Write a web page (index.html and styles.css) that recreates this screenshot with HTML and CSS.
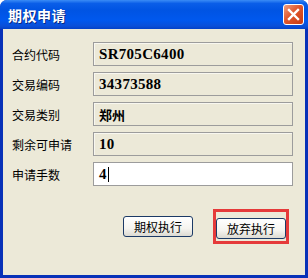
FILE: index.html
```html
<!DOCTYPE html>
<html lang="zh-CN">
<head>
    <meta charset="UTF-8">
    <title>期权申请</title>
    <link rel="stylesheet" href="styles.css">
</head>
<body>
    <div class="window">
        <div class="titlebar">
            <span class="title">期权申请</span>
            <span class="close-btn">
                <svg width="13" height="13" viewBox="0 0 13 13">
                    <path d="M2 2 L11 11 M11 2 L2 11" stroke="#fff" stroke-width="2.4" stroke-linecap="square"/>
                </svg>
            </span>
        </div>
        <div class="dialog-body">
            <div class="form-row">
                <label>合约代码</label>
                <div class="field readonly">SR705C6400</div>
            </div>
            <div class="form-row">
                <label>交易编码</label>
                <div class="field readonly">34373588</div>
            </div>
            <div class="form-row">
                <label>交易类别</label>
                <div class="field readonly cjk">郑州</div>
            </div>
            <div class="form-row">
                <label>剩余可申请</label>
                <div class="field readonly">10</div>
            </div>
            <div class="form-row">
                <label>申请手数</label>
                <div class="field editable">4<span class="caret"></span></div>
            </div>
            <div class="button-row">
                <button type="button" class="xp-btn">期权执行</button>
                <div class="highlight">
                    <button type="button" class="xp-btn">放弃执行</button>
                </div>
            </div>
        </div>
    </div>
</body>
</html>
```

FILE: styles.css
```css
body {
    margin: 0;
    padding: 0;
    background: #ffffff;
    font-family: "Noto Sans CJK SC", sans-serif;
}
.window {
    width: 308px;
    height: 278px;
    background: #0831b8;
    border-radius: 7px 7px 0 0;
    display: flex;
    flex-direction: column;
    overflow: hidden;
}
.titlebar {
    height: 29px;
    flex: none;
    display: flex;
    align-items: center;
    justify-content: space-between;
    padding: 0 4px 0 8px;
    background: linear-gradient(to bottom, #3a8cf6 0%, #0a5ee8 12%, #0054e3 35%, #0058ee 70%, #0a4fd8 90%, #0341c8 100%);
}
.title {
    color: #fff;
    font-size: 14px;
    font-weight: bold;
    letter-spacing: 0.5px;
    text-shadow: 1px 1px 0 #0a2a80;
}
.close-btn {
    width: 19px;
    height: 19px;
    border: 1px solid #fff;
    border-radius: 3px;
    background: linear-gradient(135deg, #f0a080 0%, #e0562c 45%, #c83a12 100%);
    display: flex;
    align-items: center;
    justify-content: center;
}
.dialog-body {
    flex: 1;
    margin: 0 3px 3px 3px;
    background: #ece9d8;
    padding: 13px 12px 0 9px;
    display: flex;
    flex-direction: column;
    gap: 6px;
}
.form-row {
    display: flex;
    align-items: center;
    height: 24px;
}
.form-row label {
    width: 81px;
    font-size: 12px;
    color: #000;
}
.field {
    width: 200px;
    height: 24px;
    box-sizing: border-box;
    border: 1px solid #9c9c9c;
    padding: 0 5px;
    display: flex;
    align-items: center;
    font-family: "Liberation Serif", "Noto Sans CJK SC", serif;
    font-weight: bold;
    font-size: 15px;
    letter-spacing: 0.3px;
    color: #000;
}
.field.readonly {
    background: #ece9d8;
    box-shadow: inset 1px 1px 0 #f8f7f0;
}
.field.cjk {
    font-family: "Noto Sans CJK SC", sans-serif;
    font-size: 13px;
    letter-spacing: 0;
}
.field.editable {
    background: #fff;
}
.caret {
    display: inline-block;
    width: 1px;
    height: 15px;
    background: #000;
    margin-left: 1px;
}
.button-row {
    display: flex;
    justify-content: flex-end;
    align-items: center;
    gap: 20px;
    margin-top: 17px;
    padding-right: 4px;
}
.xp-btn {
    width: 70px;
    height: 21px;
    padding: 0;
    border: 1px solid #1c3a66;
    border-radius: 3px;
    background: linear-gradient(to bottom, #ffffff 0%, #f5f4ef 60%, #dcdad2 100%);
    font-family: "Noto Sans CJK SC", sans-serif;
    font-size: 12px;
    color: #000;
}
.highlight {
    border: 3px solid #e53a3a;
    padding: 3px 0 2px 0;
}
```
